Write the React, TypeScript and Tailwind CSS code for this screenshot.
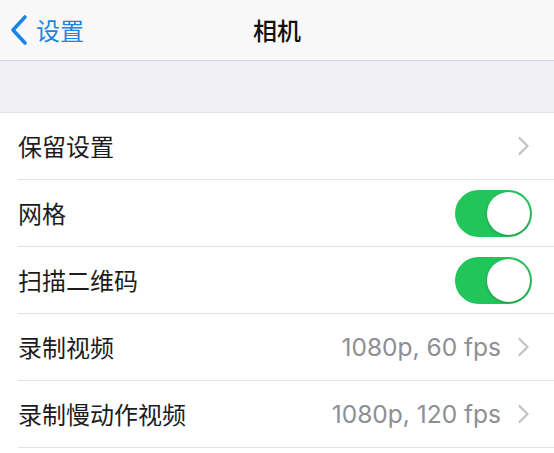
import React from "react";

const cjk = { fontFamily: '"Noto Sans CJK SC", "Noto Sans", sans-serif' };
const latin = { fontFamily: 'Inter, "Noto Sans CJK SC", sans-serif' };

const Chevron = () => (
  <svg width="13" height="20" viewBox="0 0 13 20" className="shrink-0">
    <path d="M2.5 2 L10.5 10 L2.5 18" fill="none" stroke="#c4c4c8" strokeWidth="2.4" strokeLinecap="round" strokeLinejoin="round" />
  </svg>
);

const Toggle = () => (
  <div className="w-[77px] h-[47px] rounded-full bg-[#22c55a] p-[2px] flex justify-end shrink-0">
    <div className="w-[43px] h-[43px] rounded-full bg-white shadow-[0_1px_3px_rgba(0,0,0,0.25)]" />
  </div>
);

interface RowProps {
  label: string;
  value?: string;
  toggle?: boolean;
}

const Row = ({ label, value, toggle }: RowProps) => (
  <div className="bg-white pl-[18px]">
    <div className="h-[67px] border-b border-[#e2e2e4] flex items-center justify-between pr-[22px]">
      <span className="text-[24px] text-[#1c1c1e]" style={cjk}>
        {label}
      </span>
      {toggle ? (
        <Toggle />
      ) : (
        <div className="flex items-center gap-[16px] pr-[2px]">
          {value && (
            <span className="text-[24.5px] text-[#8e8e93]" style={latin}>
              {value}
            </span>
          )}
          <Chevron />
        </div>
      )}
    </div>
  </div>
);

export default function App() {
  return (
    <div className="w-[554px] h-[453px] bg-white overflow-hidden" style={cjk}>
      <header className="h-[61px] bg-[#f8f8f9] border-b border-[#d6d6da] flex items-center relative">
        <div className="flex items-center pl-[9px] gap-[8px] text-[#1a84e8]">
          <svg width="19" height="32" viewBox="0 0 19 32">
            <path d="M16 3 L4 16 L16 29" fill="none" stroke="#1a84e8" strokeWidth="3.6" strokeLinecap="round" strokeLinejoin="round" />
          </svg>
          <span className="text-[24px]">设置</span>
        </div>
        <h1 className="absolute left-0 right-0 text-center text-[24px] font-medium text-[#111]">相机</h1>
      </header>
      <div className="h-[51px] bg-[#efeff4]" />
      <div className="border-t border-[#e2e2e4]">
        <Row label="保留设置" />
        <Row label="网格" toggle />
        <Row label="扫描二维码" toggle />
        <Row label="录制视频" value="1080p, 60 fps" />
        <Row label="录制慢动作视频" value="1080p, 120 fps" />
      </div>
    </div>
  );
}
